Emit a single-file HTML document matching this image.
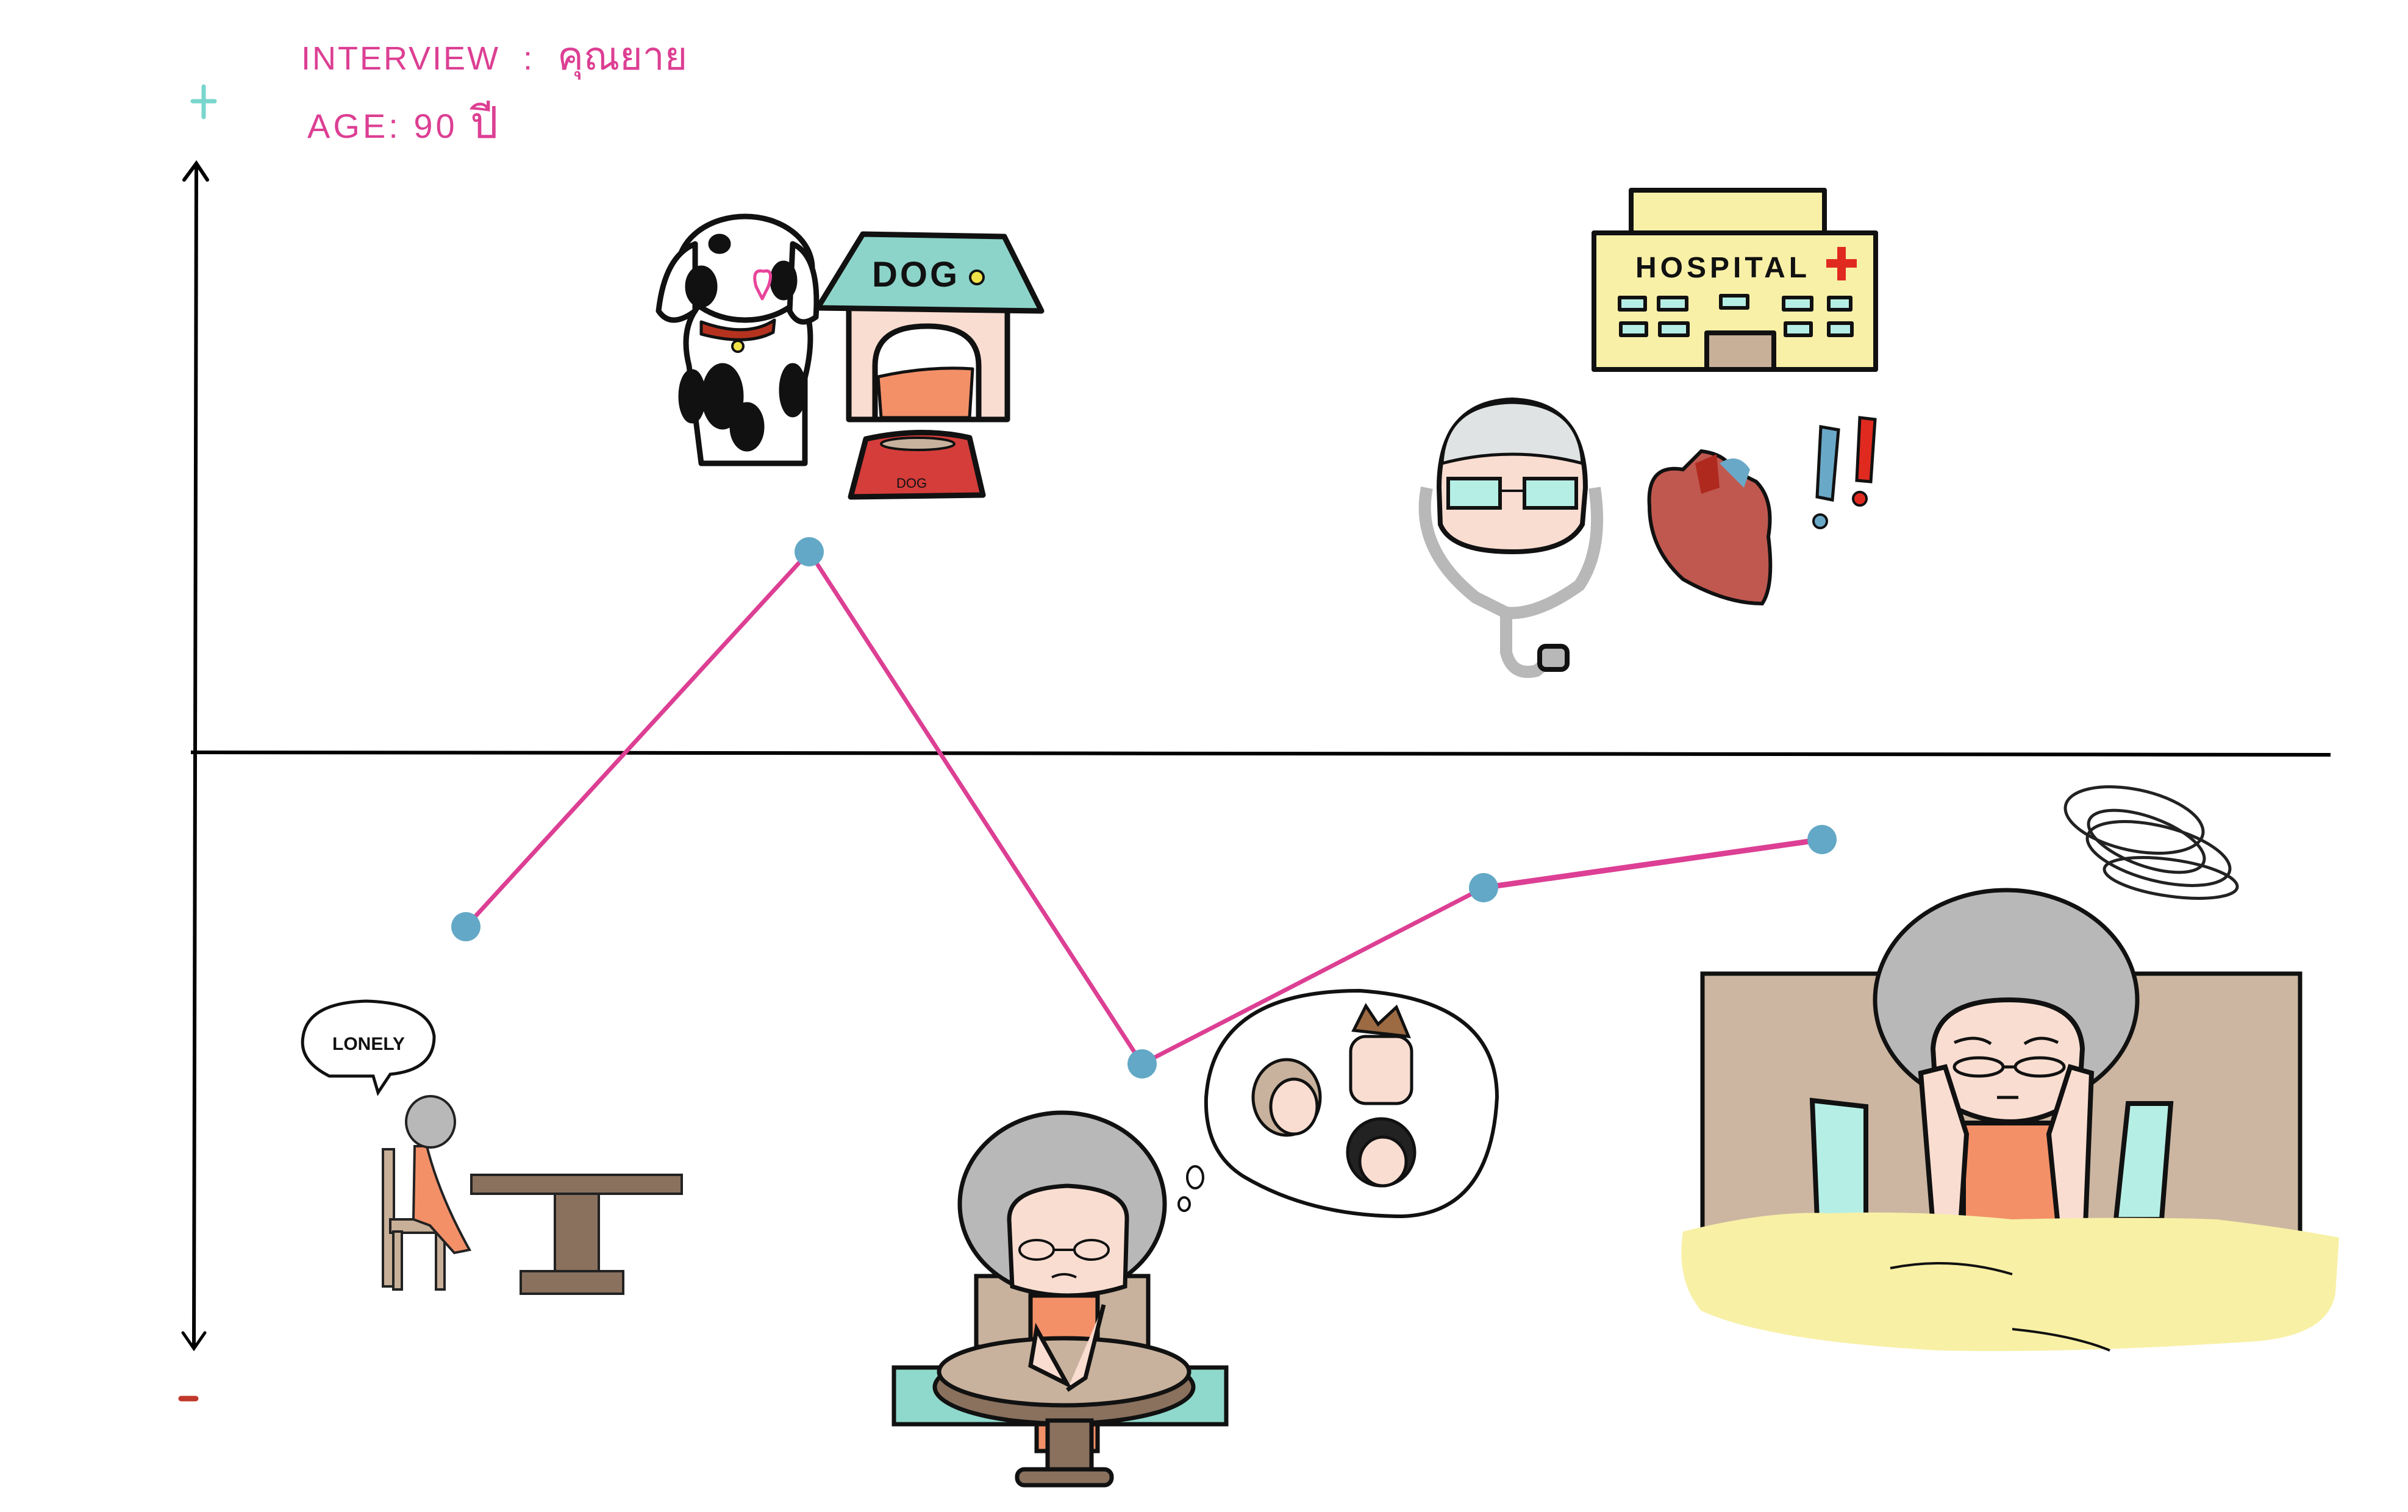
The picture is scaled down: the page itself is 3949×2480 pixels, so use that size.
<!DOCTYPE html>
<html><head><meta charset="utf-8"><style>
html,body{margin:0;padding:0;background:#fff;}
svg{display:block;}
</style></head><body>
<svg width="3949" height="2480" viewBox="0 0 3949 2480" xmlns="http://www.w3.org/2000/svg" font-family="Liberation Sans, Noto Sans CJK SC, sans-serif">
<rect width="3949" height="2480" fill="#fff"/>
<!-- header text -->
<text x="494" y="114" font-size="54" fill="#dc3f93" letter-spacing="3" font-family="Liberation Sans, sans-serif">INTERVIEW <tspan dx="20">:</tspan> <tspan dx="20" font-family="Liberation Sans, Noto Sans CJK SC, Noto Sans CJK TC, sans-serif" font-size="64" letter-spacing="0">คุณยาย</tspan></text>
<text x="504" y="226" font-size="56" fill="#dc3f93" letter-spacing="5">AGE:  90 <tspan font-size="72">ปี</tspan></text>
<!-- plus / minus -->
<path d="M334 142 V192 M316 166 H352" stroke="#78d6cd" stroke-width="7" stroke-linecap="round"/>
<path d="M297 2294 H321" stroke="#c0392b" stroke-width="9" stroke-linecap="round"/>
<!-- axes -->
<path d="M322 268 L318 2212" stroke="#000" stroke-width="6"/>
<path d="M302 295 L322 268 L340 295" stroke="#000" stroke-width="6" fill="none" stroke-linecap="round"/>
<path d="M300 2186 L318 2212 L336 2186" stroke="#000" stroke-width="5" fill="none" stroke-linecap="round"/>
<path d="M313 1234 L3822 1238" stroke="#000" stroke-width="6"/>

<!-- DOG -->
<g stroke="#111" stroke-width="9" stroke-linejoin="round">
 <path d="M1150 760 L1130 600 Q1110 520 1170 480 L1230 470 L1300 470 Q1345 520 1320 620 L1320 760 Z" fill="#fff"/>
 <ellipse cx="1222" cy="440" rx="110" ry="85" fill="#fff"/>
 <path d="M1140 400 Q1090 420 1080 510 Q1100 540 1140 510 Z" fill="#fff"/>
 <path d="M1300 400 Q1345 420 1338 520 Q1310 540 1295 510 Z" fill="#fff"/>
 <ellipse cx="1150" cy="470" rx="22" ry="30" fill="#111"/>
 <ellipse cx="1285" cy="460" rx="18" ry="28" fill="#111"/>
 <ellipse cx="1185" cy="650" rx="30" ry="50" fill="#111"/>
 <ellipse cx="1225" cy="700" rx="24" ry="36" fill="#111"/>
 <ellipse cx="1180" cy="400" rx="14" ry="12" fill="#111"/>
 <ellipse cx="1135" cy="650" rx="18" ry="40" fill="#111"/>
 <ellipse cx="1300" cy="640" rx="18" ry="40" fill="#111"/>
 <path d="M1150 528 Q1225 555 1270 525 L1268 545 Q1225 568 1150 548 Z" fill="#b5321f" stroke-width="5"/>
 <circle cx="1210" cy="568" r="9" fill="#f2e24a" stroke-width="4"/>
 <path d="M1240 470 Q1232 440 1252 445 Q1270 440 1260 470 L1250 490 Z" fill="none" stroke="#e8449a" stroke-width="5"/>
</g>
<!-- doghouse -->
<g stroke="#111" stroke-width="9" stroke-linejoin="round">
 <rect x="1392" y="503" width="260" height="185" fill="#f9ddd1"/>
 <path d="M1415 384 L1647 388 L1708 510 L1341 505 Z" fill="#8cd4c9"/>
 <path d="M1435 688 L1435 600 Q1435 535 1520 535 Q1605 535 1605 600 L1605 688 Z" fill="#fff"/>
 <path d="M1440 618 Q1520 600 1595 605 L1590 685 L1445 685 Z" fill="#f39068" stroke-width="5"/>
 <path d="M1395 815 L1420 720 Q1510 700 1590 718 L1612 812 Z" fill="#d43d3a"/>
 <ellipse cx="1505" cy="728" rx="60" ry="10" fill="#c8b29d" stroke-width="4"/>
</g>
<text x="1430" y="470" font-size="58" font-weight="bold" fill="#111" letter-spacing="4">DOG</text>
<circle cx="1602" cy="455" r="11" fill="#f2e24a" stroke="#111" stroke-width="4"/>
<text x="1470" y="800" font-size="22" fill="#111">DOG</text>

<!-- HOSPITAL -->
<g stroke="#111" stroke-width="8" stroke-linejoin="round">
 <rect x="2675" y="312" width="317" height="70" fill="#f9f0a8"/>
 <rect x="2614" y="382" width="462" height="224" fill="#f9f0a8"/>
 <rect x="2799" y="546" width="110" height="60" fill="#c8af98"/>
 <g fill="#b5eee5" stroke-width="6">
  <rect x="2656" y="488" width="42" height="20"/><rect x="2720" y="488" width="46" height="20"/>
  <rect x="2822" y="485" width="44" height="20"/><rect x="2925" y="488" width="46" height="20"/>
  <rect x="2999" y="488" width="36" height="20"/>
  <rect x="2658" y="530" width="42" height="20"/><rect x="2722" y="530" width="46" height="20"/>
  <rect x="2928" y="530" width="42" height="20"/><rect x="2999" y="530" width="38" height="20"/>
 </g>
</g>
<text x="2682" y="455" font-size="48" font-weight="bold" fill="#111" letter-spacing="6">HOSPITAL</text>
<path d="M3020 405 V460 M2995 432 H3045" stroke="#e02a20" stroke-width="14"/>
<!-- doctor -->
<g stroke="#111" stroke-width="8">
 <path d="M2340 800 Q2320 900 2420 980 L2470 1005 Q2520 1010 2590 960 Q2630 900 2615 800" fill="none" stroke="#b8b8b8" stroke-width="20"/>
 <path d="M2470 1005 L2470 1070 Q2480 1110 2520 1100 L2545 1080" fill="none" stroke="#b8b8b8" stroke-width="20"/>
 <rect x="2525" y="1060" width="45" height="38" rx="10" fill="#b8b8b8"/>
 <path d="M2360 800 Q2360 660 2480 656 Q2600 660 2600 800 L2595 860 Q2570 905 2480 905 Q2380 905 2362 860 Z" fill="#f9ddd1"/>
 <path d="M2365 760 Q2370 662 2480 660 Q2590 662 2595 760 Q2480 730 2365 760 Z" fill="#dfe3e3" stroke-width="5"/>
 <rect x="2375" y="785" width="85" height="48" fill="#b5eee5" stroke-width="6"/>
 <rect x="2500" y="785" width="85" height="48" fill="#b5eee5" stroke-width="6"/>
 <path d="M2460 805 H2500" stroke-width="4"/>
</g>
<!-- heart -->
<path d="M2705 830 Q2700 760 2760 770 L2790 740 Q2830 745 2840 770 L2880 790 Q2910 820 2900 880 Q2910 960 2890 990 Q2830 990 2760 950 Q2705 900 2705 830 Z" fill="#c0584f" stroke="#111" stroke-width="6"/>
<path d="M2780 760 L2790 810 L2820 800 L2815 745 Z" fill="#b0291f"/>
<path d="M2820 760 Q2850 740 2870 770 L2860 800 Z" fill="#6aa8c8"/>
<!-- exclamations -->
<path d="M2986 700 L3015 705 L3005 820 L2980 815 Z" fill="#6aa8c8" stroke="#111" stroke-width="5"/>
<circle cx="2985" cy="855" r="11" fill="#6aa8c8" stroke="#111" stroke-width="4"/>
<path d="M3050 685 L3075 688 L3068 790 L3045 788 Z" fill="#e02a20" stroke="#111" stroke-width="5"/>
<circle cx="3050" cy="818" r="11" fill="#e02a20" stroke="#111" stroke-width="4"/>

<!-- LONELY -->
<path d="M540 1765 Q490 1740 497 1700 Q505 1645 600 1642 Q705 1645 712 1700 Q712 1755 640 1762 L620 1792 L612 1765 Z" fill="#fff" stroke="#111" stroke-width="5"/>
<text x="545" y="1722" font-size="30" font-weight="bold" fill="#111">LONELY</text>
<g stroke="#222" stroke-width="4">
 <rect x="628" y="1885" width="18" height="225" fill="#c8af98"/>
 <rect x="640" y="2000" width="90" height="22" fill="#c8af98"/>
 <rect x="645" y="2020" width="14" height="95" fill="#c8af98"/>
 <rect x="715" y="2020" width="14" height="95" fill="#c8af98"/>
 <path d="M680 1880 L700 1880 Q720 1960 770 2050 L745 2055 L705 2010 L678 2000 Z" fill="#f39068"/>
 <ellipse cx="706" cy="1840" rx="40" ry="42" fill="#b8b8b8"/>
 <rect x="773" y="1927" width="345" height="31" fill="#8a715e"/>
 <rect x="910" y="1958" width="72" height="130" fill="#8a715e"/>
 <rect x="854" y="2085" width="168" height="37" fill="#8a715e"/>
</g>

<!-- THOUGHT -->
<path d="M2040 1930 Q1975 1890 1978 1800 Q1990 1625 2230 1625 Q2455 1640 2455 1800 Q2445 1990 2300 1995 Q2150 1995 2040 1930 Z" fill="#fff" stroke="#111" stroke-width="6"/>
<ellipse cx="1960" cy="1931" rx="13" ry="18" fill="#fff" stroke="#111" stroke-width="4"/>
<ellipse cx="1942" cy="1975" rx="9" ry="11" fill="#fff" stroke="#111" stroke-width="4"/>
<g stroke="#111" stroke-width="5">
 <ellipse cx="2110" cy="1800" rx="55" ry="62" fill="#c8b29d"/>
 <ellipse cx="2122" cy="1815" rx="38" ry="45" fill="#f9ddd1"/>
 <path d="M2220 1690 L2240 1650 L2260 1680 L2290 1652 L2310 1700 Z" fill="#9c6a43"/>
 <rect x="2215" y="1700" width="100" height="110" rx="25" fill="#f9ddd1"/>
 <ellipse cx="2265" cy="1890" rx="55" ry="55" fill="#222"/>
 <ellipse cx="2268" cy="1905" rx="38" ry="40" fill="#f9ddd1"/>
</g>

<!-- MIDDLE GRANDMA -->
<g stroke="#111" stroke-width="7">
 <rect x="1601" y="2093" width="282" height="116" fill="#c8b29d"/>
 <ellipse cx="1742" cy="1975" rx="168" ry="150" fill="#b8b8b8"/>
 <path d="M1655 2000 Q1655 1950 1750 1945 Q1850 1950 1848 2000 L1845 2110 Q1750 2140 1660 2110 Z" fill="#f9ddd1"/>
 <rect x="1690" y="2125" width="110" height="90" fill="#f39068"/>
 <rect x="1700" y="2330" width="100" height="50" fill="#f39068"/>
 <rect x="1466" y="2243" width="545" height="93" fill="#8fd8cc"/>
 <ellipse cx="1745" cy="2275" rx="212" ry="60" fill="#8a715e"/>
 <ellipse cx="1745" cy="2250" rx="205" ry="55" fill="#c8b29d"/>
 <rect x="1718" y="2330" width="72" height="90" fill="#8a715e"/>
 <rect x="1668" y="2410" width="155" height="26" rx="12" fill="#8a715e"/>
 <path d="M1700 2180 L1690 2240 L1750 2270 Z M1810 2140 L1780 2260 L1750 2280" fill="#f9ddd1"/>
</g>
<g fill="none" stroke="#111" stroke-width="4">
 <ellipse cx="1700" cy="2050" rx="28" ry="16"/><ellipse cx="1790" cy="2050" rx="28" ry="16"/>
 <path d="M1728 2050 H1762 M1725 2095 Q1745 2085 1765 2095"/>
</g>

<!-- BED GRANDMA -->
<g stroke="#111" stroke-width="8">
 <rect x="2792" y="1597" width="980" height="447" fill="#ccb6a1" stroke-width="7"/>
 <path d="M2972 1805 L3060 1815 L3060 2000 L2980 2000 Z M3490 1810 L3560 1810 L3545 2000 L3470 2000 Z" fill="#b5eee5"/>
 <ellipse cx="3290" cy="1640" rx="215" ry="180" fill="#b8b8b8" stroke-width="7"/>
 <path d="M3170 1720 Q3175 1640 3295 1640 Q3410 1640 3415 1720 L3410 1800 Q3300 1880 3175 1800 Z" fill="#f9ddd1"/>
 <rect x="3220" y="1842" width="160" height="162" fill="#f39068"/>
 <path d="M3150 1760 L3190 1750 L3225 1860 L3215 2010 L3170 2010 Z M3430 1760 L3395 1750 L3360 1860 L3375 2010 L3420 2010 Z" fill="#f9ddd1"/>
</g>
<g fill="none" stroke="#111" stroke-width="5">
 <ellipse cx="3245" cy="1750" rx="40" ry="15"/><ellipse cx="3345" cy="1750" rx="40" ry="15"/>
 <path d="M3285 1750 H3305 M3275 1800 H3310 M3205 1710 Q3240 1695 3265 1712 M3320 1712 Q3345 1695 3375 1710"/>
</g>
<path d="M2760 2020 Q2900 1985 3000 1990 Q3150 1985 3300 2000 Q3500 1995 3635 2000 Q3760 2015 3836 2030 L3830 2120 Q3820 2190 3700 2200 Q3400 2220 3180 2215 Q2900 2200 2790 2150 Q2748 2100 2760 2020 Z" fill="#f8f0a5"/>
<path d="M3100 2080 Q3200 2060 3300 2090 M3300 2180 Q3400 2190 3460 2215" fill="none" stroke="#111" stroke-width="4"/>
<!-- scribble -->
<g fill="none" stroke="#222" stroke-width="5">
 <ellipse cx="3500" cy="1345" rx="115" ry="50" transform="rotate(12 3500 1345)"/>
 <ellipse cx="3540" cy="1400" rx="120" ry="45" transform="rotate(14 3540 1400)"/>
 <ellipse cx="3560" cy="1440" rx="110" ry="30" transform="rotate(8 3560 1440)"/>
 <ellipse cx="3520" cy="1380" rx="100" ry="40" transform="rotate(20 3520 1380)"/>
</g>

<!-- graph line -->
<polyline points="764,1520 1327,905 1873,1745 2433,1456 2988,1377" fill="none" stroke="#dc3f93" stroke-width="7" stroke-linejoin="round"/>
<path d="M2433 1456 L2988 1377" stroke="#dc3f93" stroke-width="9"/>
<g fill="#63a8c6">
 <ellipse cx="764" cy="1520" rx="24" ry="24"/>
 <ellipse cx="1327" cy="905" rx="24" ry="24"/>
 <ellipse cx="1873" cy="1745" rx="24" ry="24"/>
 <ellipse cx="2433" cy="1456" rx="24" ry="24"/>
 <ellipse cx="2988" cy="1377" rx="24" ry="24"/>
</g>
</svg>
</body></html>
